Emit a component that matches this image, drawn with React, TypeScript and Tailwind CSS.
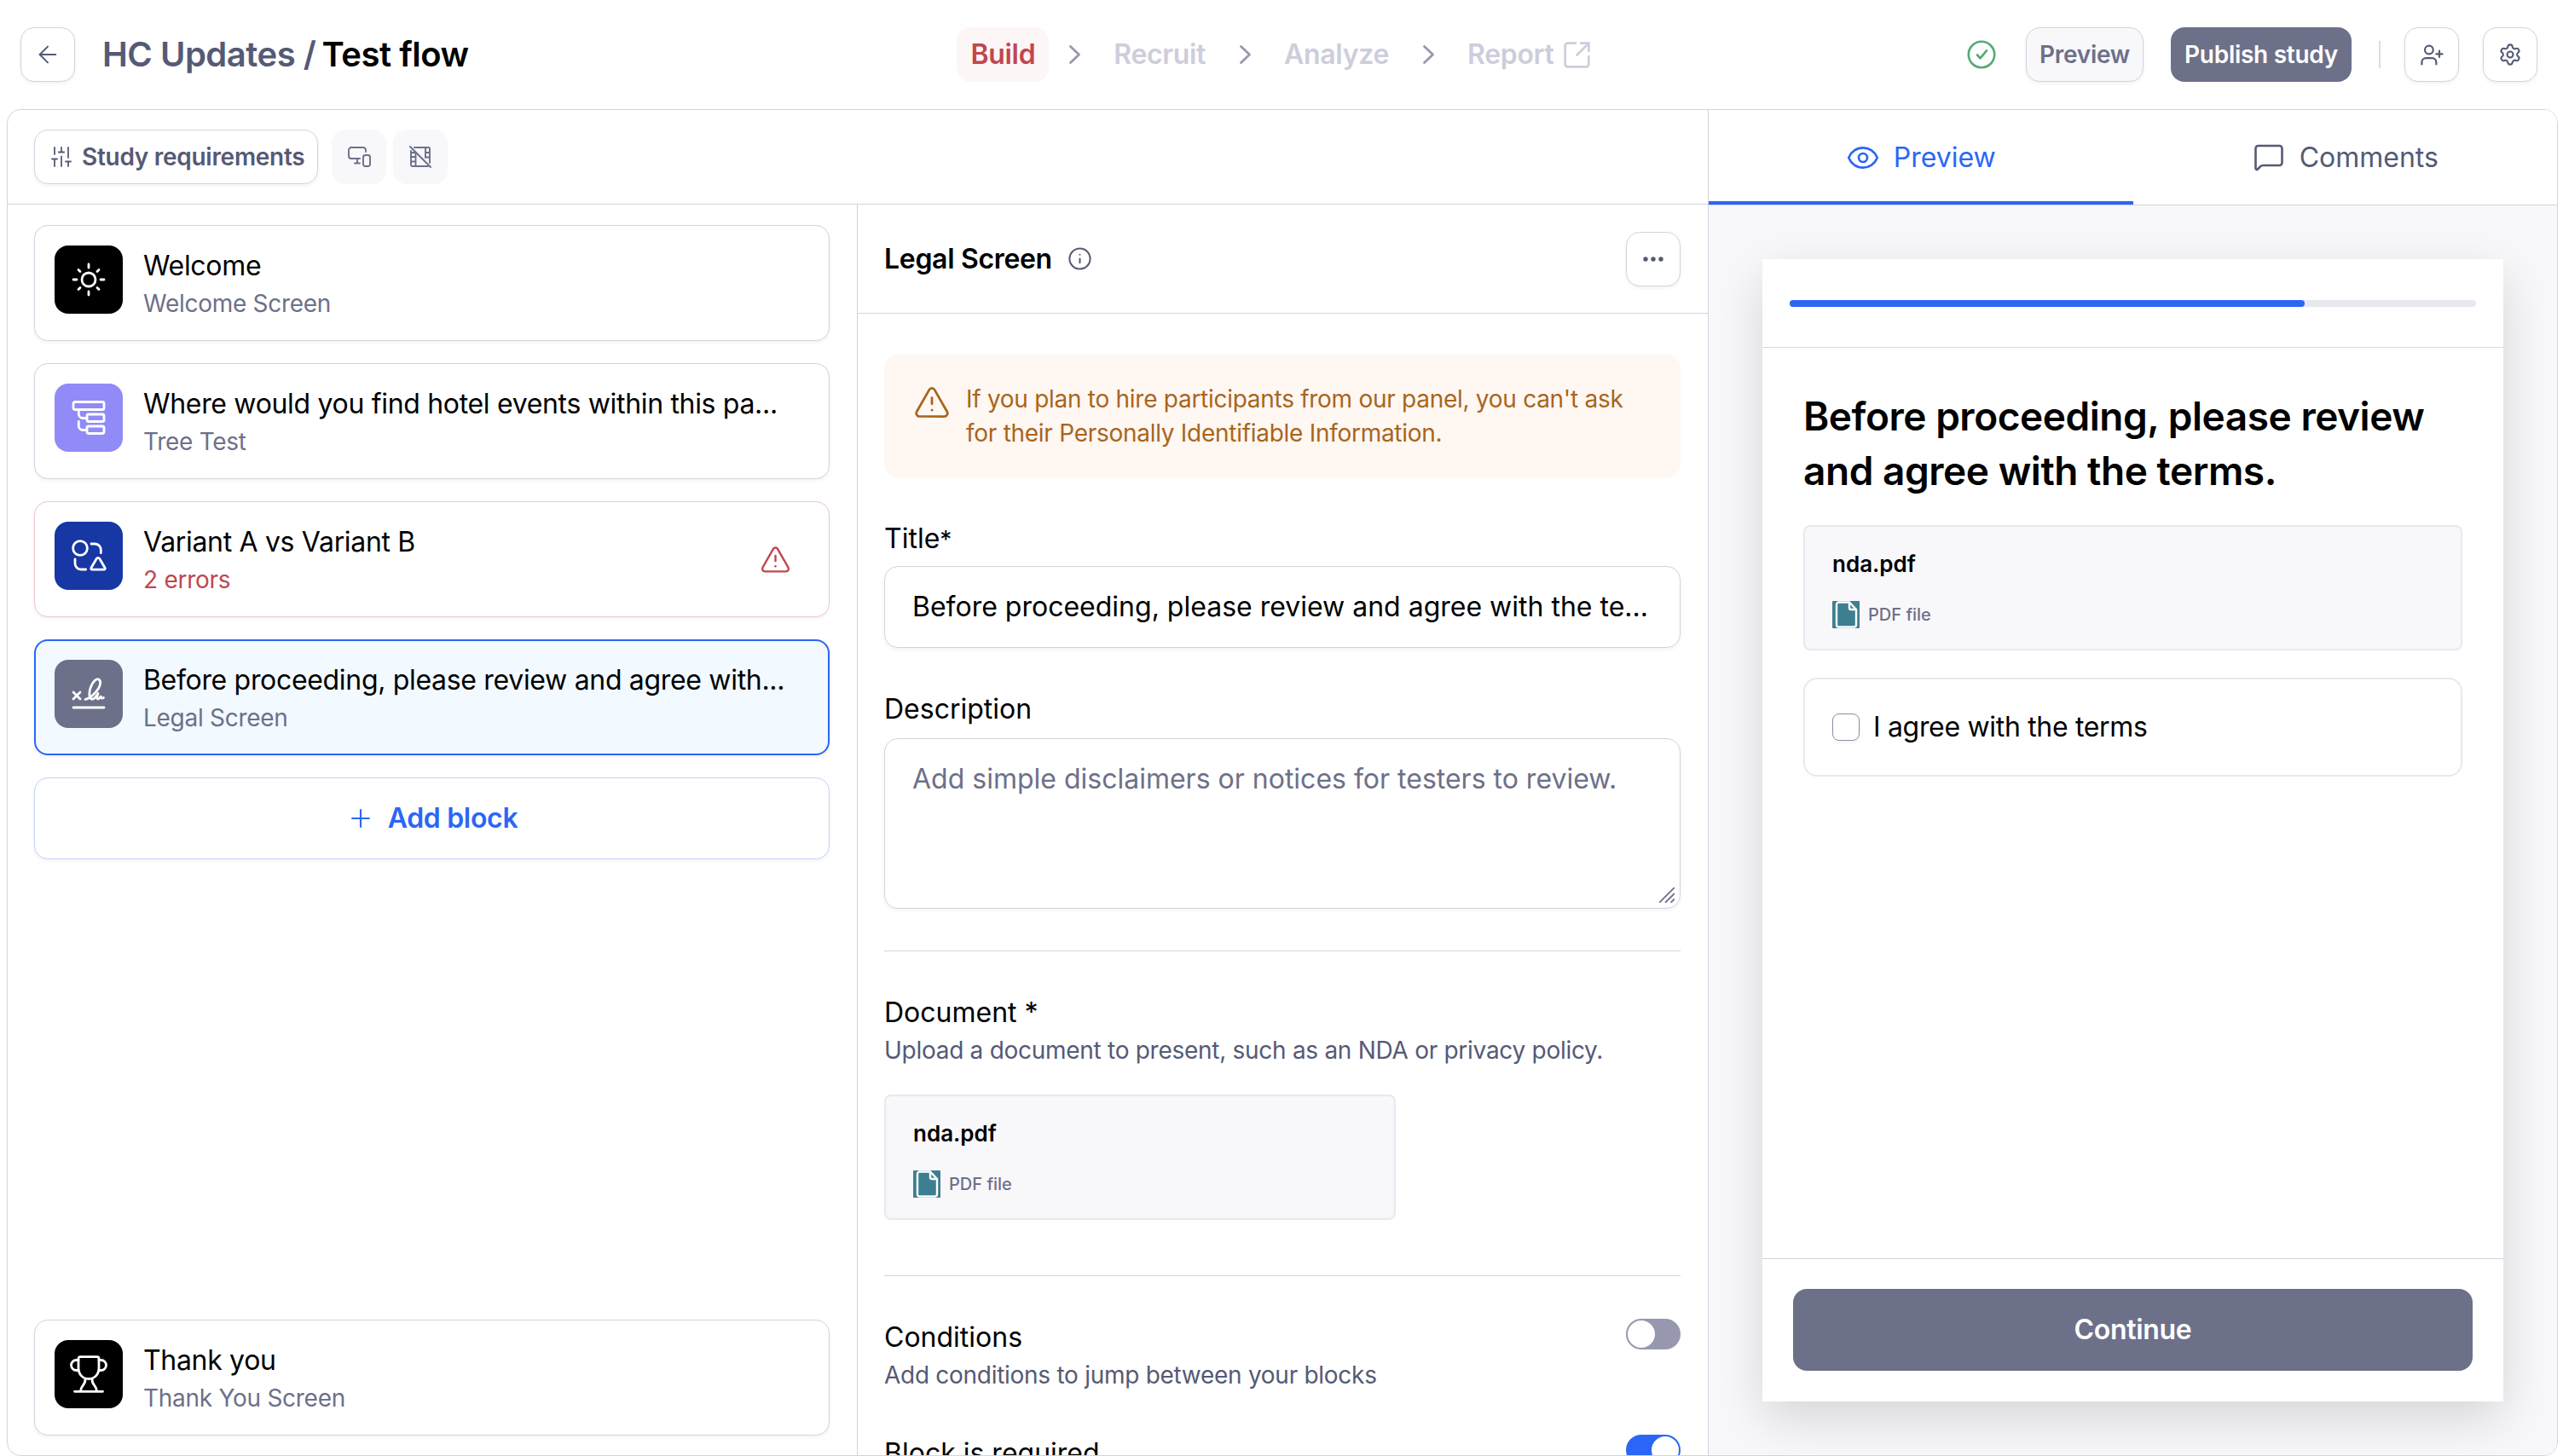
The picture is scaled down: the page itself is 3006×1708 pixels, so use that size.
import type { ReactNode } from 'react';
import clsx from 'clsx';
import {
  ArrowLeft,
  Eye,
  Info,
  Plus,
  Settings,
  SquareArrowOutUpRight,
  TriangleAlert,
  UserPlus,
} from 'lucide-react';

type BlockKind = 'welcome' | 'tree' | 'variant' | 'legal' | 'thanks';

interface Block {
  kind: BlockKind;
  title: string;
  subtitle: string;
  hasErrors?: boolean;
  selected?: boolean;
}

const BLOCKS: Block[] = [
  { kind: 'welcome', title: 'Welcome', subtitle: 'Welcome Screen' },
  { kind: 'tree', title: 'Where would you find hotel events within this pa...', subtitle: 'Tree Test' },
  { kind: 'variant', title: 'Variant A vs Variant B', subtitle: '2 errors', hasErrors: true },
  { kind: 'legal', title: 'Before proceeding, please review and agree with...', subtitle: 'Legal Screen', selected: true },
];

const THANK_YOU: Block = { kind: 'thanks', title: 'Thank you', subtitle: 'Thank You Screen' };

const STEPS = ['Build', 'Recruit', 'Analyze', 'Report'];

const BLOCK_COLORS: Record<BlockKind, string> = {
  welcome: 'bg-black',
  tree: 'bg-[#918bf7]',
  variant: 'bg-[#1637a4]',
  legal: 'bg-[#6d7089]',
  thanks: 'bg-black',
};

const BLOCK_GLYPHS: Record<BlockKind, ReactNode> = {
  welcome: (
    <>
      <circle cx="22" cy="22" r="8" />
      <path d="M22 4v4M22 36v4M4 22h4M36 22h4M10 10.5l2 2M32 31.5l2 2M10 33.5l2-2M32 12.5l2-2" />
    </>
  ),
  tree: (
    <>
      <rect x="4" y="3.5" width="36" height="9" rx="2" />
      <rect x="20" y="18" width="20" height="8.5" rx="2" />
      <rect x="20" y="32" width="20" height="8.5" rx="2" />
      <path d="M10.3 12.5v5a5 5 0 0 0 5 5H20M10.3 26.5v5a5 5 0 0 0 5 5H20" />
    </>
  ),
  variant: (
    <>
      <circle cx="12" cy="13" r="8.4" />
      <path d="M25 8h4.3a7 7 0 0 1 7 7v3.7M6 26v5a7 7 0 0 0 7 7h5.7" />
      <path d="M31.3 25.3 25 36a1.4 1.4 0 0 0 1.2 2.2h13.6A1.4 1.4 0 0 0 41 36l-6.3-10.7a2 2 0 0 0-3.4 0z" />
    </>
  ),
  legal: (
    <>
      <path d="M4 20l8 8M12 20l-8 8M4 38h36" />
      <path d="M18 28.5c7-1.5 16-11 17.5-18 1-5-2.5-7.5-6-4.5-5 4.5-8 14.5-6 20 1.5 4 5.5 2.5 9.5-4.5-1.5 3-2 6.5 0 6.5s2-3 3.2-2.8c1 .2 0 3 3.3 1.3" />
    </>
  ),
  thanks: (
    <>
      <path d="M12 1.7h20a2 2 0 0 1 2 2V15c0 7-5 12.5-12 12.5S10 22 10 15V3.7a2 2 0 0 1 2-2z" />
      <path d="M10 5.5H7.5a6 6 0 0 0 0 12H10M34 5.5h2.5a6 6 0 0 1 0 12H34" />
      <path d="M18 27.5c.5 8-5.5 7-5.5 14.8M26 27.5c-.5 8 5.5 7 5.5 14.8M5.5 42.3h33" />
    </>
  ),
};

function BlockIcon({ kind }: { kind: BlockKind }) {
  return (
    <div className={clsx('flex size-20 shrink-0 items-center justify-center rounded-2xl', BLOCK_COLORS[kind])}>
      <svg
        viewBox="0 0 44 44"
        className="size-11"
        fill="none"
        stroke="white"
        strokeWidth="2.8"
        strokeLinecap="round"
        strokeLinejoin="round"
      >
        {BLOCK_GLYPHS[kind]}
      </svg>
    </div>
  );
}

function BlockCard({ block }: { block: Block }) {
  return (
    <div
      className={clsx(
        'flex h-[136px] shrink-0 items-start rounded-2xl shadow-[0_2px_4px_rgba(30,30,60,0.06)]',
        block.selected
          ? 'border-2 border-[#2b66f6] bg-[#f2f9ff] p-[22px]'
          : 'border bg-white p-[23px]',
        !block.selected && (block.hasErrors ? 'border-[#f0c4c8]' : 'border-[#d3d3df]')
      )}
    >
      <BlockIcon kind={block.kind} />
      <div className="ml-6 flex-1 whitespace-nowrap">
        <p className="text-[32px] leading-[48px] tracking-[-0.01em] text-black">{block.title}</p>
        <p
          className={clsx(
            'text-[28px] leading-10 tracking-[-0.01em]',
            block.hasErrors ? 'text-[#c0474f]' : 'text-[#6d7089]'
          )}
        >
          {block.subtitle}
        </p>
      </div>
      {block.hasErrors && (
        <TriangleAlert size={37} strokeWidth={1.6} className="mr-[21px] self-center text-[#c0474f]" />
      )}
    </div>
  );
}

function IconButton({ children }: { children: ReactNode }) {
  return (
    <button
      type="button"
      className="flex size-16 shrink-0 items-center justify-center rounded-2xl border border-[#d3d3df] bg-white text-[#555a75] shadow-[0_2px_4px_rgba(30,30,60,0.06)]"
    >
      {children}
    </button>
  );
}

function StepChevron() {
  return (
    <svg
      viewBox="0 0 28 36"
      className="h-9 w-7 text-[#9797b0]"
      fill="none"
      stroke="currentColor"
      strokeWidth="2.8"
      strokeLinecap="round"
      strokeLinejoin="round"
    >
      <path d="M9.5 8.5 19.5 18 9.5 27.5" />
    </svg>
  );
}

function Header() {
  return (
    <header className="grid h-32 shrink-0 grid-cols-[1fr_auto_1fr] items-center px-6">
      <div className="flex items-center gap-8">
        <IconButton>
          <ArrowLeft size={32} strokeWidth={1.5} />
        </IconButton>
        <h1 className="text-[40px] leading-none font-semibold tracking-[-0.012em] whitespace-nowrap text-black">
          <span className="mr-[7px] text-[#555a75]">HC Updates /</span>
          Test flow
        </h1>
      </div>

      <nav className="flex items-center gap-4 text-[32px] font-semibold tracking-[-0.01em]">
        {STEPS.map((step, i) => (
          <div key={step} className="flex items-center gap-4">
            {i > 0 && <StepChevron />}
            <div
              className={clsx(
                'flex h-16 items-center gap-2 rounded-2xl px-4',
                i === 0 ? 'bg-[#fdf6f6] text-[#c0474f]' : 'text-[#cdcddb]'
              )}
            >
              {step}
              {step === 'Report' && <SquareArrowOutUpRight size={37} strokeWidth={1.7} />}
            </div>
          </div>
        ))}
      </nav>

      <div className="flex items-center justify-end pr-1.5">
        <svg
          viewBox="0 0 40 40"
          className="size-10 text-[#57a877]"
          fill="none"
          stroke="currentColor"
          strokeWidth="2.6"
          strokeLinecap="round"
          strokeLinejoin="round"
        >
          <circle cx="20" cy="20" r="15.2" />
          <path d="M15 20.5l3.5 3.8 7.5-9" />
        </svg>
        <button
          type="button"
          className="ml-8 flex h-16 w-[138px] items-center justify-center rounded-2xl border border-[#d3d3df] bg-[#f8f8fb] text-[28px] font-semibold tracking-[-0.01em] text-[#6d7089] shadow-[0_2px_4px_rgba(30,30,60,0.06)]"
        >
          Preview
        </button>
        <button
          type="button"
          className="ml-8 flex h-16 w-[212px] items-center justify-center rounded-2xl bg-[#6d7089] text-[28px] font-semibold tracking-[-0.01em] whitespace-nowrap text-white"
        >
          Publish study
        </button>
        <div className="mr-7 ml-8 h-8 w-0.5 bg-[#dcdce6]" />
        <div className="flex gap-7">
          <IconButton>
            <UserPlus size={29} strokeWidth={1.8} />
          </IconButton>
          <IconButton>
            <Settings size={28} strokeWidth={1.8} />
          </IconButton>
        </div>
      </div>
    </header>
  );
}

function Toolbar() {
  return (
    <div className="flex h-[111px] shrink-0 items-center border-b border-[#d3d3df] pl-[31px]">
      <button
        type="button"
        className="flex h-16 w-[333px] items-center gap-3 rounded-2xl border border-[#d3d3df] bg-white pl-[19px] text-[28px] font-semibold tracking-[-0.01em] whitespace-nowrap text-[#555a75] shadow-[0_2px_4px_rgba(30,30,60,0.06)]"
      >
        <svg viewBox="0 0 24 24" className="size-6" fill="none" stroke="currentColor" strokeWidth="1.8" strokeLinecap="round">
          <path d="M4 1v8M1 14.5h6M4 14.5V23M12 1v5.5M8.8 6.5h6.4M12 11.5V23M20 1v12M17 17.5h6M20 17.5V23" />
        </svg>
        Study requirements
      </button>
      <div className="ml-4 flex size-16 items-center justify-center rounded-2xl bg-[#f8f8fb] text-[#6d7089]">
        <svg
          viewBox="0 0 27 24"
          className="h-6 w-[27px]"
          fill="none"
          stroke="currentColor"
          strokeWidth="1.9"
          strokeLinecap="round"
          strokeLinejoin="round"
        >
          <path d="M21 6V4a3 3 0 0 0-3-3H4a3 3 0 0 0-3 3v7a3 3 0 0 0 3 3h10M11 14v5M8 19.5h6" />
          <rect x="18" y="10" width="8" height="13" rx="2.5" />
        </svg>
      </div>
      <div className="ml-2 flex size-16 items-center justify-center rounded-2xl bg-[#f8f8fb] text-[#6d7089]">
        <svg
          viewBox="0 0 26 26"
          className="size-[26px]"
          fill="none"
          stroke="currentColor"
          strokeWidth="1.9"
          strokeLinecap="round"
          strokeLinejoin="round"
        >
          <path d="M6 2h16.5A1.5 1.5 0 0 1 24 3.5V20M2 6v16.5A1.5 1.5 0 0 0 3.5 24H22" />
          <path d="M7.5 8v16M19 2v12M2 8h5.5M2 13h5.5M2 18.5h5.5M19 8h5M19 13.5h5" />
          <path d="M1 1l24 24" />
        </svg>
      </div>
    </div>
  );
}

function FileCard({ className }: { className?: string }) {
  return (
    <div className={clsx('h-[147px] rounded-lg border-2 border-[#e8e8f0] bg-[#f8f8fb] px-8 pt-[26px]', className)}>
      <p className="text-[26px] leading-9 font-semibold text-black">nda.pdf</p>
      <div className="mt-[25px] flex items-center gap-2.5">
        <svg viewBox="0 0 32 32" className="size-8" fill="none">
          <rect width="32" height="32" rx="1" fill="#3d7f90" />
          <g stroke="white" strokeWidth="2.4">
            <path d="M7.5 1.5H20l8 8.5v18a2.5 2.5 0 0 1-2.5 2.5h-18A2.5 2.5 0 0 1 5 28V4a2.5 2.5 0 0 1 2.5-2.5z" />
            <path d="M20 1.5V8a2 2 0 0 0 2 2h6" />
          </g>
        </svg>
        <span className="text-xl font-medium text-[#6d7089]">PDF file</span>
      </div>
    </div>
  );
}

function Toggle({ on }: { on?: boolean }) {
  return (
    <div
      className={clsx(
        'flex h-9 w-16 shrink-0 items-center rounded-full px-0.5',
        on ? 'justify-end bg-[#2b66f6]' : 'bg-[#9797b0]'
      )}
    >
      <div className="size-8 rounded-full bg-white" />
    </div>
  );
}

function BlockEditor() {
  return (
    <section className="flex min-w-0 flex-1 flex-col border-l border-[#d3d3df]">
      <div className="flex h-32 shrink-0 items-center border-b border-[#d3d3df] pr-8 pl-[31px]">
        <h2 className="text-[32px] font-semibold tracking-[-0.01em] text-black">Legal Screen</h2>
        <Info size={29} strokeWidth={1.7} className="ml-[18px] text-[#555a75]" />
        <div className="ml-auto">
          <IconButton>
            <svg viewBox="0 0 24 8" className="h-2 w-6" fill="currentColor">
              <circle cx="3" cy="4" r="2.7" />
              <circle cx="12" cy="4" r="2.7" />
              <circle cx="21" cy="4" r="2.7" />
            </svg>
          </IconButton>
        </div>
      </div>

      <div className="min-h-0 flex-1 overflow-hidden pt-12 pr-8 pl-[31px]">
        <div className="flex h-36 gap-[18px] rounded-2xl bg-[#fff7f2] py-8 pl-[34px] text-[#a8651c]">
          <TriangleAlert size={44} strokeWidth={1.5} className="mt-0.5 shrink-0" />
          <p className="text-[28px] leading-10 tracking-[-0.01em] whitespace-nowrap">
            If you plan to hire participants from our panel, you can't ask
            <br />
            for their Personally Identifiable Information.
          </p>
        </div>

        <div className="mt-12">
          <p className="text-[32px] leading-[48px] text-black">
            Title<span className="text-[28px]">*</span>
          </p>
          <div className="mt-[7px] flex h-24 items-center rounded-2xl border border-[#d3d3df] px-8 text-[32px] whitespace-nowrap text-black shadow-[0_2px_4px_rgba(30,30,60,0.06)]">
            Before proceeding, please review and agree with the te...
          </div>
        </div>

        <div className="mt-12">
          <p className="text-[32px] leading-[48px] text-black">Description</p>
          <div className="relative mt-2.5 h-[200px] rounded-2xl border border-[#d3d3df] px-8 py-[23px] text-[32px] leading-[48px] whitespace-nowrap text-[#6d7089] shadow-[0_2px_4px_rgba(30,30,60,0.06)]">
            Add simple disclaimers or notices for testers to review.
            <svg
              viewBox="0 0 18 18"
              className="absolute right-1.5 bottom-1.5 size-[18px]"
              stroke="currentColor"
              strokeWidth="1.8"
            >
              <path d="M0 18L18 0M7 18L18 7M13.5 18l4.5-4.5" />
            </svg>
          </div>
        </div>

        <div className="mt-[49px] border-t border-[#d3d3df] pt-12">
          <p className="text-[32px] leading-[48px] text-black">Document *</p>
          <p className="text-[28px] leading-10 tracking-[-0.01em] text-[#555a75]">
            Upload a document to present, such as an NDA or privacy policy.
          </p>
          <FileCard className="mt-8 w-[600px]" />
        </div>

        <div className="mt-[65px] flex justify-between border-t border-[#d3d3df] pt-12">
          <div>
            <p className="text-[32px] leading-[48px] text-black">Conditions</p>
            <p className="text-[28px] leading-10 tracking-[-0.01em] text-[#555a75]">
              Add conditions to jump between your blocks
            </p>
          </div>
          <div className="pt-0.5">
            <Toggle />
          </div>
        </div>

        <div className="mt-12 flex justify-between">
          <p className="text-[32px] leading-[48px] text-black">Block is required</p>
          <div className="pt-0.5">
            <Toggle on />
          </div>
        </div>
      </div>
    </section>
  );
}

function PreviewPanel() {
  return (
    <aside className="flex w-[996px] shrink-0 flex-col border-l border-[#d3d3df] bg-[#f8f8fb]">
      <div className="flex h-28 shrink-0 border-b border-[#d3d3df] bg-white text-[32px]">
        <div className="flex w-1/2 items-center justify-center gap-4 border-b-4 border-[#2b66f6] pt-1 text-[#2b66f6]">
          <Eye size={40} strokeWidth={1.6} />
          Preview
        </div>
        <div className="flex w-1/2 items-center justify-center gap-4 text-[#555a75]">
          <svg
            viewBox="0 0 40 40"
            className="size-10"
            fill="none"
            stroke="currentColor"
            strokeWidth="2.6"
            strokeLinejoin="round"
          >
            <path d="M4.5 32.5V9a3 3 0 0 1 3-3h25a3 3 0 0 1 3 3v17a3 3 0 0 1-3 3H13a4 4 0 0 0-2.8 1.2l-3.3 3.3c-.9.9-2.4.3-2.4-1z" />
          </svg>
          Comments
        </div>
      </div>

      <div className="flex min-h-0 flex-1 overflow-hidden p-[63px]">
        <div className="flex flex-1 flex-col bg-white shadow-[0_20px_56px_rgba(0,0,0,0.14)]">
          <div className="flex h-26 shrink-0 items-center border-b border-[#d8d8e0] px-8">
            <div className="h-2 flex-1 rounded-full bg-[#e8e8f0]">
              <div className="h-full w-3/4 rounded-full bg-[#2b66f6]" />
            </div>
          </div>

          <div className="flex-1 px-12 pt-12">
            <h2 className="text-[46px] leading-[64px] font-semibold tracking-[-0.01em] whitespace-nowrap text-black">
              Before proceeding, please review
              <br />
              and agree with the terms.
            </h2>
            <FileCard className="mt-8" />
            <div className="mt-8 flex h-[116px] items-center gap-4 rounded-2xl border-2 border-[#e8e8f0] px-8 text-[32px] tracking-[-0.01em] text-black">
              <div className="size-8 rounded-lg border border-[#8c8ca8] bg-white shadow-[0_2px_4px_rgba(30,30,60,0.06)]" />
              I agree with the terms
            </div>
          </div>

          <div className="h-[168px] shrink-0 border-t border-[#d3d3df] px-9 pt-[35px]">
            <button
              type="button"
              className="h-24 w-full rounded-2xl bg-[#6d7089] text-[32px] font-semibold tracking-[-0.01em] text-white"
            >
              Continue
            </button>
          </div>
        </div>
      </div>
    </aside>
  );
}

export default function App() {
  return (
    <div className="flex h-[1708px] w-[3006px] flex-col overflow-hidden bg-white font-['Inter',sans-serif] antialiased">
      <Header />
      <main className="mr-1.5 ml-2 flex min-h-0 flex-1 overflow-hidden rounded-2xl border border-[#d3d3df]">
        <div className="flex min-w-0 flex-1 flex-col">
          <Toolbar />
          <div className="flex min-h-0 flex-1">
            <section className="flex w-[996px] shrink-0 flex-col gap-[26px] pt-6 pr-8 pb-[23px] pl-[31px]">
              {BLOCKS.map((block) => (
                <BlockCard key={block.kind} block={block} />
              ))}
              <button
                type="button"
                className="flex h-24 items-center justify-center gap-[15px] rounded-2xl border border-[#c3d3fc] bg-white text-[32px] font-semibold tracking-[-0.01em] text-[#2b66f6] shadow-[0_2px_4px_rgba(30,30,60,0.06)]"
              >
                <Plus size={34} strokeWidth={1.5} />
                Add block
              </button>
              <div className="mt-auto">
                <BlockCard block={THANK_YOU} />
              </div>
            </section>
            <BlockEditor />
          </div>
        </div>
        <PreviewPanel />
      </main>
    </div>
  );
}
